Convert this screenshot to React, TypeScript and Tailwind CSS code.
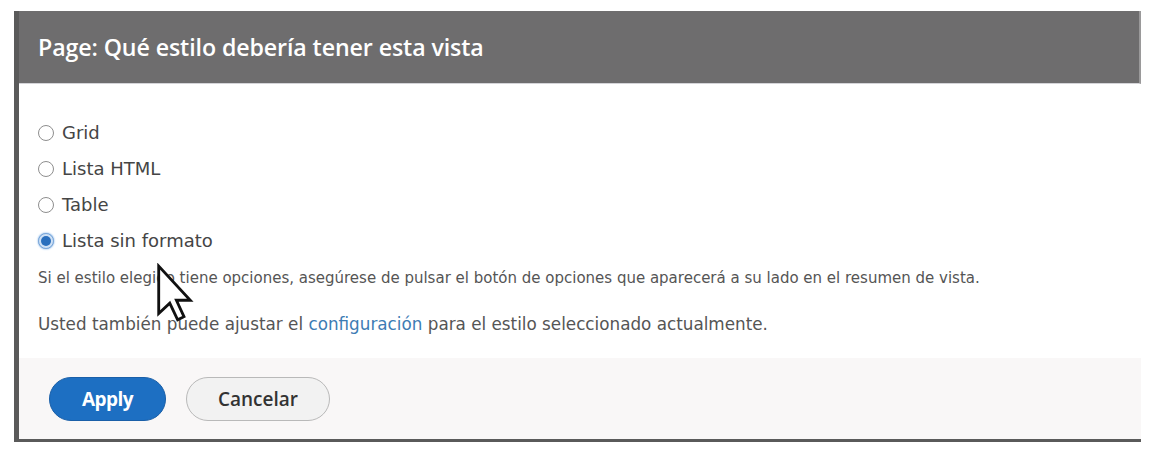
const options = ['Grid', 'Lista HTML', 'Table', 'Lista sin formato'];

function Radio({ checked }: { checked: boolean }) {
  if (checked) {
    return (
      <span className="flex h-[16px] w-[16px] shrink-0 items-center justify-center rounded-full border border-[#7aa6d8] bg-[#cfe1f5] shadow-[0_0_2px_#5b9be0]">
        <span className="h-[10px] w-[10px] rounded-full bg-[#2a6fbd]" />
      </span>
    );
  }
  return <span className="h-[16px] w-[16px] shrink-0 rounded-full border-[1.5px] border-[#8e8e8e] bg-white" />;
}

function Cursor() {
  return (
    <svg
      className="pointer-events-none absolute left-[154px] top-[263px]"
      width="41"
      height="60"
      viewBox="0 0 12 19"
    >
      <path
        d="M1 1 L1 16 L4.5 12.7 L7 18 L9 17 L6.6 11.8 L11 11.8 Z"
        fill="#ffffff"
        stroke="#111111"
        strokeWidth="0.9"
        strokeLinejoin="miter"
      />
    </svg>
  );
}

export default function App() {
  return (
    <div className="relative min-h-[455px] w-[1156px] bg-white pt-[11px] pl-[14px]">
      <div className="flex w-[1127px] flex-col border-l-[5px] border-b-[3px] border-[#5a5a5a]">
        <div className="flex h-[73px] items-center border-b border-r-2 border-b-[#d4d4d8] border-r-[#9a999a] bg-[#6e6d6e] pl-[19px]">
          <h1 className="font-['Open_Sans',sans-serif] text-[23.2px] font-semibold tracking-[-0.1px] text-white">
            Page: Qué estilo debería tener esta vista
          </h1>
        </div>

        <div className="flex h-[274px] flex-col bg-white pl-[19px] pt-[39px] font-['DejaVu_Sans',sans-serif] text-[#454545]">
          <div className="flex flex-col gap-[16px]">
            {options.map((o, i) => (
              <label key={o} className="flex h-[20px] items-center gap-[8px] text-[18px] leading-[20px]">
                <Radio checked={i === 3} />
                <span>{o}</span>
              </label>
            ))}
          </div>
          <p className="mt-[17px] h-[20px] text-[15px] leading-[20px] text-[#555]">
            Si el estilo elegido tiene opciones, asegúrese de pulsar el botón de opciones que aparecerá a su lado en el resumen de vista.
          </p>
          <p className="mt-[26px] h-[20px] text-[16.8px] leading-[20px] text-[#555]">
            Usted también puede ajustar el{' '}
            <a className="text-[#3d7cb4]">configuración</a> para el estilo seleccionado actualmente.
          </p>
        </div>

        <div className="flex h-[81px] items-start gap-[20px] bg-[#f9f7f7] pl-[30px] pt-[19px] font-['Open_Sans',sans-serif]">
          <button className="h-[44px] w-[117px] rounded-full border border-[#1a5fa8] bg-[#1d6fc2] text-[19px] font-bold tracking-[-0.6px] text-white">
            Apply
          </button>
          <button className="h-[44px] w-[144px] rounded-full border-[1.5px] border-[#b9b9b9] bg-[#f2f2f2] text-[19px] font-semibold text-[#333]">
            Cancelar
          </button>
        </div>
      </div>
      <Cursor />
    </div>
  );
}
